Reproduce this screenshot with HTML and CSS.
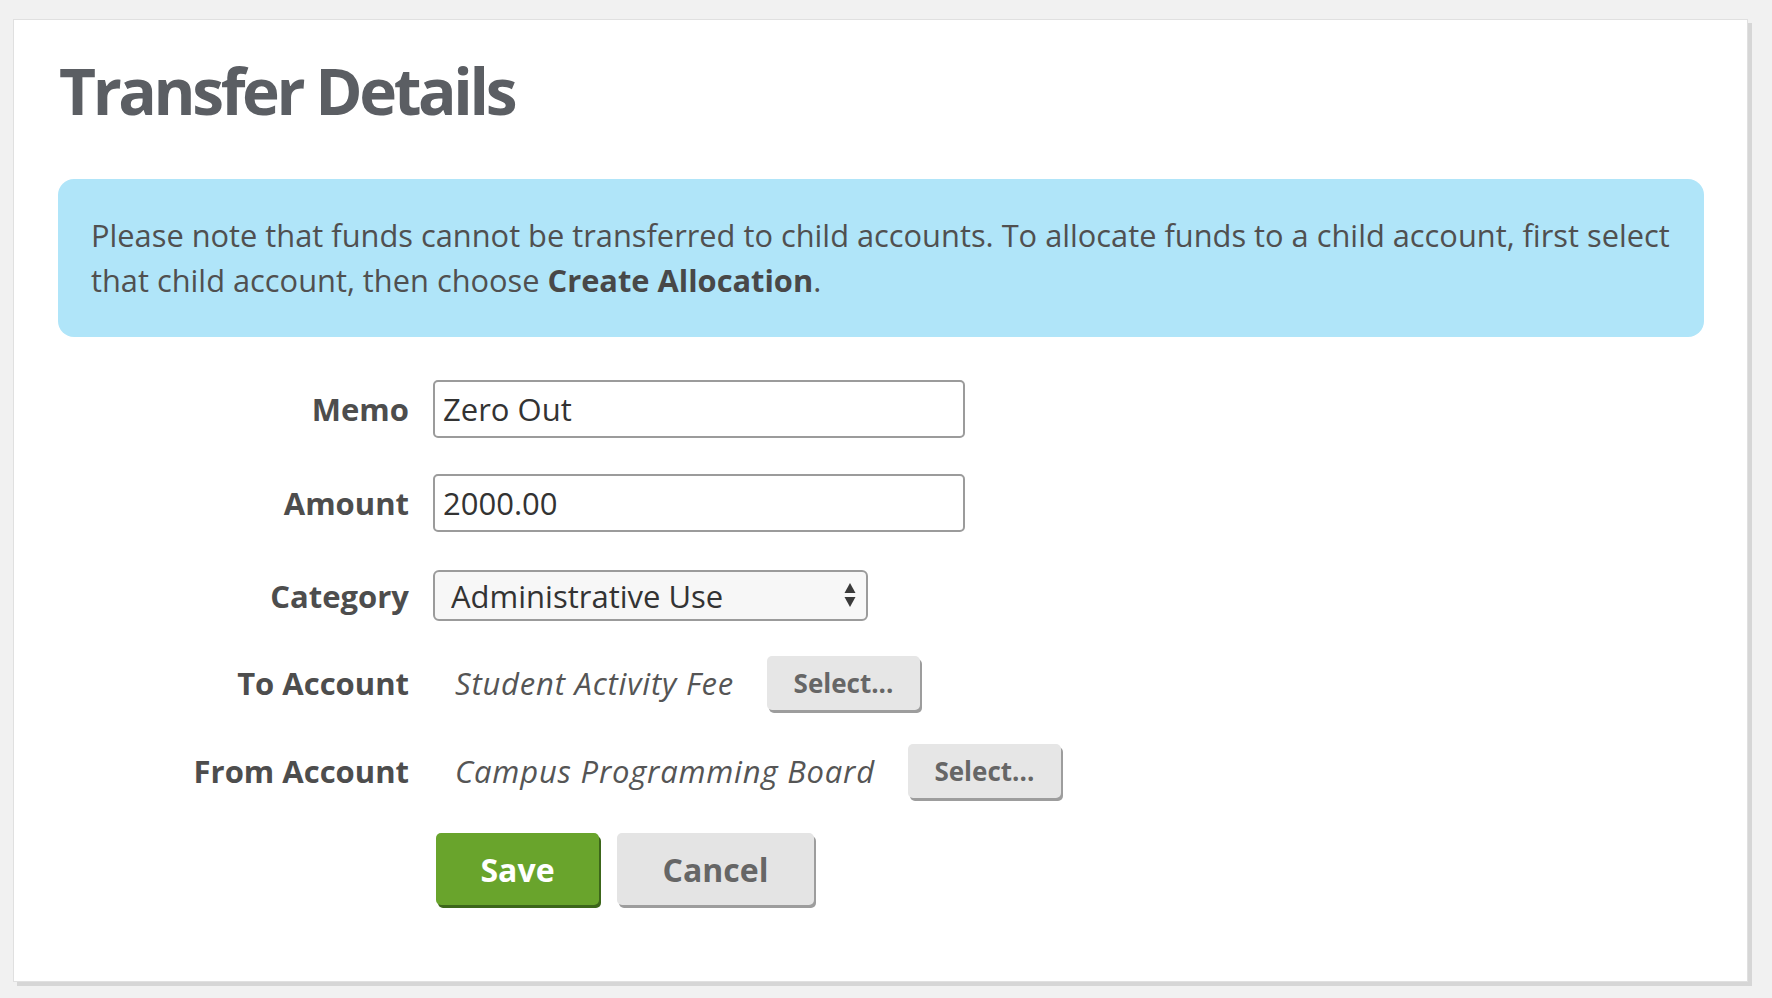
FILE: index.html
```html
<!DOCTYPE html>
<html lang="en">
<head>
<meta charset="utf-8">
<title>Transfer Details</title>
<link rel="stylesheet" href="styles.css">
</head>
<body>
<main class="card">
  <h1 class="title">Transfer Details</h1>
  <p class="alert">Please note that funds cannot be transferred to child accounts. To allocate funds to a child account, first select that child account, then choose <strong>Create Allocation</strong>.</p>
  <form class="form">
    <div class="row row-memo">
      <label class="label" for="memo">Memo</label>
      <input id="memo" class="text-input" type="text" value="Zero Out">
    </div>

    <div class="row row-amount">
      <label class="label" for="amount">Amount</label>
      <input id="amount" class="text-input" type="text" value="2000.00">
    </div>

    <div class="row row-category">
      <label class="label" for="category">Category</label>
      <div class="select-wrap">
        <select id="category" class="select"><option>Administrative Use</option></select>
        <svg class="select-arrows" width="12" height="26" viewBox="0 0 12 26"><path d="M6 1 L11.5 11 L0.5 11 Z" fill="#3a3a3a"/><path d="M0.5 15 L11.5 15 L6 25 Z" fill="#3a3a3a"/></svg>
      </div>
    </div>

    <div class="row row-to">
      <span class="label">To Account</span>
      <div class="account">
        <span class="account-name">Student Activity Fee</span>
        <button type="button" class="btn btn-select">Select...</button>
      </div>
    </div>

    <div class="row row-from">
      <span class="label">From Account</span>
      <div class="account">
        <span class="account-name">Campus Programming Board</span>
        <button type="button" class="btn btn-select">Select...</button>
      </div>
    </div>

    <div class="row row-actions">
      <span class="label"></span>
      <div class="actions">
        <button type="button" class="btn btn-save">Save</button>
        <button type="button" class="btn btn-cancel">Cancel</button>
      </div>
    </div>
  </form>
</main>
</body>
</html>
```

FILE: styles.css
```css
html, body {
  margin: 0;
  padding: 0;
  background: #f1f1f1;
}
body {
  font-family: "Open Sans", "DejaVu Sans", sans-serif;
  color: #4a4a4a;
  padding: 19px 0 0 13px;
  height: 998px;
  box-sizing: border-box;
}
.card {
  width: 1735px;
  height: 963px;
  box-sizing: border-box;
  background: #fff;
  border: 1px solid #e0e0e0;
  box-shadow: 4px 4px 0 #d6d6d6;
  padding: 32px 43px 0 44px;
}
.title {
  margin: 0 0 50px 1px;
  font-size: 64px;
  line-height: 77px;
  font-weight: 700;
  color: #5b5e63;
  letter-spacing: -3.4px;
}
.alert {
  margin: 0;
  background: #b0e5f9;
  border-radius: 16px;
  padding: 34px 16px 34px 33px;
  font-size: 30.8px;
  line-height: 45px;
  color: #505050;
}
.alert strong {
  font-weight: 700;
  color: #484848;
}
.form {
  display: flex;
  flex-direction: column;
  margin-top: 43px;
}
.row {
  display: flex;
  align-items: center;
  gap: 24px;
}
.row-amount { margin-top: 36px; }
.row-category { margin-top: 38px; }
.row-to { margin-top: 35px; }
.row-from { margin-top: 34px; }
.row-actions { margin-top: 35px; }
.label {
  flex: 0 0 351px;
  text-align: right;
  font-size: 31px;
  font-weight: 700;
  color: #4d4d4d;
}
.text-input {
  width: 532px;
  height: 58px;
  box-sizing: border-box;
  border: 2px solid #9b9b9b;
  border-radius: 5px;
  padding: 0 8px;
  font-family: "Open Sans", "DejaVu Sans", sans-serif;
  font-size: 31px;
  color: #333;
  background: #fff;
}
.select-wrap {
  position: relative;
  width: 435px;
}
.select {
  appearance: none;
  -webkit-appearance: none;
  width: 435px;
  height: 51px;
  box-sizing: border-box;
  border: 2px solid #9b9b9b;
  border-radius: 6px;
  background: #f7f7f7;
  padding: 0 40px 0 16px;
  font-family: "Open Sans", "DejaVu Sans", sans-serif;
  font-size: 31px;
  color: #333;
}
.select-arrows {
  position: absolute;
  right: 12px;
  top: 12px;
  pointer-events: none;
}
.account {
  display: flex;
  align-items: center;
  gap: 33px;
  padding-left: 22px;
}
.account-name {
  font-style: italic;
  font-size: 31px;
  letter-spacing: 0.8px;
  color: #555;
}
.btn {
  font-family: "Open Sans", "DejaVu Sans", sans-serif;
  font-weight: 700;
  border: none;
  border-radius: 5px;
  cursor: pointer;
}
.btn-select {
  width: 153px;
  height: 54px;
  background: #e6e6e6;
  color: #666;
  font-size: 26px;
  box-shadow: 2px 3px 0 #9d9d9d;
}
.actions {
  display: flex;
  gap: 18px;
  padding-left: 3px;
}
.btn-save {
  width: 163px;
  height: 72px;
  background: #69a42c;
  color: #fff;
  font-size: 32px;
  box-shadow: 2px 3px 0 #3c661a;
}
.btn-cancel {
  width: 197px;
  height: 72px;
  background: #e4e4e4;
  color: #666;
  font-size: 32px;
  box-shadow: 2px 3px 0 #9d9d9d;
}
```
